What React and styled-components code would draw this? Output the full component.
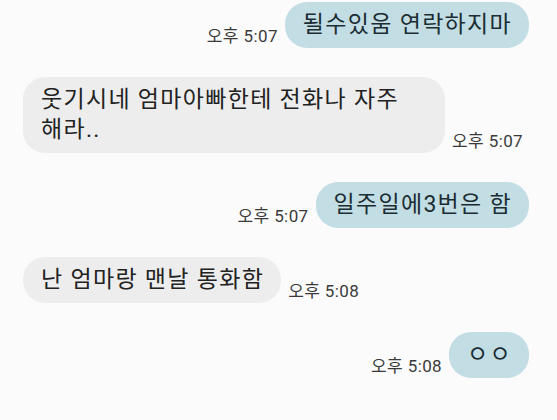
import React from "react";
import styled, { createGlobalStyle } from "styled-components";

const messages = [
  { me: true, text: "될수있움 연락하지마", time: "오후 5:07" },
  { me: false, text: "웃기시네 엄마아빠한테 전화나 자주 해라..", time: "오후 5:07" },
  { me: true, text: "일주일에3번은 함", time: "오후 5:07" },
  { me: false, text: "난 엄마랑 맨날 통화함", time: "오후 5:08" },
  { me: true, text: "ㅇㅇ", time: "오후 5:08" },
];

const App = () => {
  return (
    <>
      <GlobalStyle />
      <Chat>
        {messages.map((msg, index) => {
          return (
            <Row key={index} $me={msg.me}>
              <Bubble $me={msg.me}>{msg.text}</Bubble>
              <Time>{msg.time}</Time>
            </Row>
          );
        })}
      </Chat>
    </>
  );
};

export default App;

const GlobalStyle = createGlobalStyle`
  html, body {
    margin: 0;
    padding: 0;
    background: #fbfbfb;
  }
  body {
    font-family: Roboto, "Noto Sans CJK KR", sans-serif;
    overflow: hidden;
  }
`;

const Chat = styled.div`
  width: 557px;
  height: 420px;
  box-sizing: border-box;
  padding: 2px 28px 0 23px;
  display: flex;
  flex-direction: column;
  gap: 29px;
`;

const Row = styled.div`
  display: flex;
  flex-direction: ${(props) => (props.$me ? "row-reverse" : "row")};
  justify-content: flex-start;
  align-items: flex-end;
  gap: 7px;
`;

const Bubble = styled.div`
  box-sizing: border-box;
  max-width: 422px;
  padding: 8px 17px 8px 18px;
  border-radius: 22px;
  font-size: 23px;
  line-height: 30px;
  letter-spacing: 1.3px;
  word-break: keep-all;
  color: ${(props) => (props.$me ? "#1b2d33" : "#222222")};
  background: ${(props) => (props.$me ? "#c2dee4" : "#ededed")};
`;

const Time = styled.span`
  font-size: 17px;
  line-height: 20px;
  letter-spacing: 0.4px;
  color: #3a3a3a;
  white-space: nowrap;
  padding-bottom: 2px;
`;
